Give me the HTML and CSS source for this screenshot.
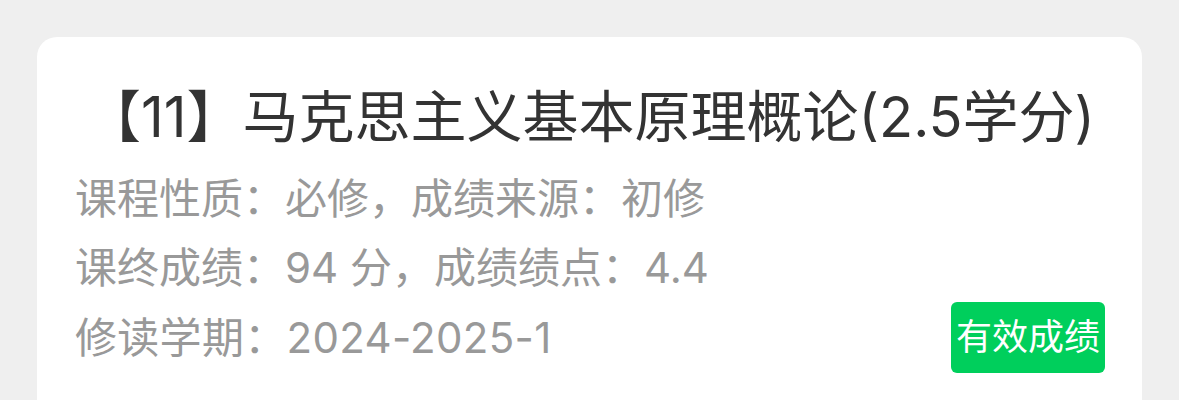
FILE: index.html
```html
<!DOCTYPE html>
<html lang="zh-CN">
<head>
<meta charset="utf-8">
<title>成绩</title>
<link rel="stylesheet" href="styles.css">
</head>
<body>
<div class="page">
  <div class="card">
    <div class="title">【11】马克思主义基本原理概论(2.5学分)</div>
    <div class="info">
      <div class="row">课程性质：必修，成绩来源：初修</div>
      <div class="row">课终成绩：94 分，成绩绩点：4.4</div>
      <div class="row last">
        <span class="term">修读学期：2024-2025-1</span>
        <span class="badge">有效成绩</span>
      </div>
    </div>
  </div>
</div>
</body>
</html>
```
FILE: styles.css
```css
html, body {
  margin: 0;
  padding: 0;
  background: #efefef;
}
body {
  font-family: "Inter", "Noto Sans CJK SC", sans-serif;
}
.page {
  padding: 37px 37px 0 37px;
}
.card {
  background: #ffffff;
  border-radius: 20px;
  padding: 39px 37px 40px 38px;
  min-height: 400px;
}
.title {
  font-size: 56px;
  line-height: 82px;
  color: #333333;
  text-align: center;
  white-space: nowrap;
}
.info {
  margin-top: 6px;
}
.row {
  font-size: 42px;
  line-height: 69px;
  color: #999999;
  white-space: nowrap;
}
.row.last {
  display: flex;
  justify-content: space-between;
  align-items: center;
}
.term {
  letter-spacing: 0.3px;
}
.badge {
  background: #00cf5c;
  color: #ffffff;
  font-size: 36px;
  line-height: 71px;
  height: 71px;
  padding: 0 5px;
  border-radius: 6px;
}
```
